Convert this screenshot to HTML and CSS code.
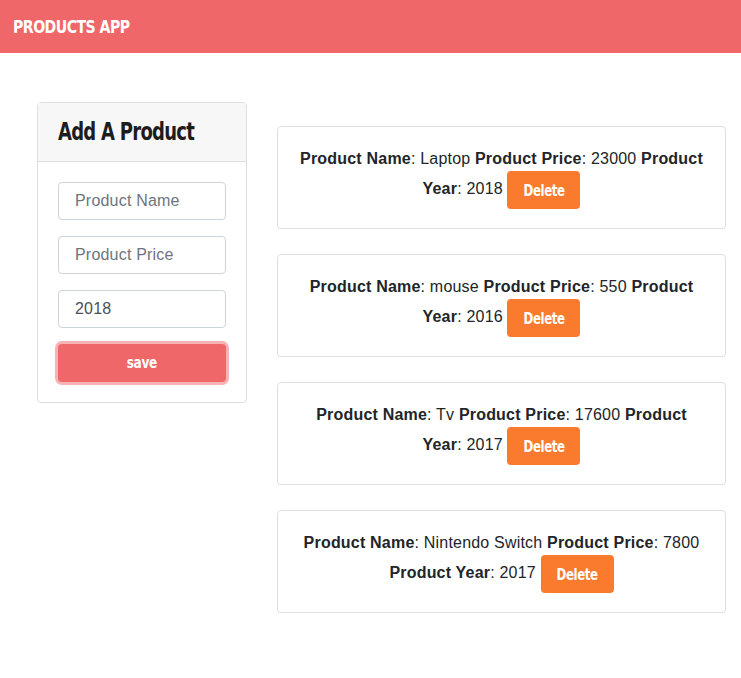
FILE: index.html
```html
<!DOCTYPE html>
<html>
<head>
<meta charset="utf-8">
<link rel="stylesheet" href="styles.css">
</head>
<body>
<header class="navbar"><span class="brand">PRODUCTS APP</span></header>
<main class="layout">
  <section class="form-card">
    <div class="form-card-header"><h2><span class="narrow">Add A Product</span></h2></div>
    <form class="form-card-body">
      <input class="field" type="text" placeholder="Product Name">
      <input class="field" type="text" placeholder="Product Price">
      <input class="field" type="text" value="2018">
      <button type="button" class="save-btn"><span class="narrow">save</span></button>
    </form>
  </section>
  <section class="list">
    <div class="product"><p><b>Product Name</b>: Laptop <b>Product Price</b>: 23000 <b>Product Year</b>: 2018 <button class="del-btn"><span class="narrow">Delete</span></button></p></div>
    <div class="product"><p><b>Product Name</b>: mouse <b>Product Price</b>: 550 <b>Product Year</b>: 2016 <button class="del-btn"><span class="narrow">Delete</span></button></p></div>
    <div class="product"><p><b>Product Name</b>: Tv <b>Product Price</b>: 17600 <b>Product Year</b>: 2017 <button class="del-btn"><span class="narrow">Delete</span></button></p></div>
    <div class="product"><p><b>Product Name</b>: Nintendo Switch <b>Product Price</b>: 7800 <b>Product Year</b>: 2017 <button class="del-btn"><span class="narrow">Delete</span></button></p></div>
  </section>
</main>
</body>
</html>
```

FILE: styles.css
```css
* { box-sizing: border-box; }
body {
  margin: 0;
  font-family: "Liberation Sans", Arial, sans-serif;
  font-size: 16px;
  line-height: 1.5;
  color: #212529;
  background: #fff;
}
.navbar {
  height: 53px;
  background: #f0676a;
  display: flex;
  align-items: center;
  padding: 0 13px;
}
.brand,
.form-card-header h2,
.save-btn,
.del-btn {
  font-family: "DejaVu Sans", sans-serif;
  font-stretch: condensed;
  font-weight: bold;
}
.brand {
  display: inline-block;
  color: #fff;
  font-size: 18px;
  letter-spacing: -0.6px;
  transform: scaleX(0.87);
  transform-origin: left center;
}
.narrow {
  display: inline-block;
}
.layout {
  display: flex;
  align-items: flex-start;
  padding: 49px 15px 40px 37px;
  gap: 30px;
}
.form-card {
  width: 210px;
  border: 1px solid #dfdfdf;
  border-radius: 4px;
  flex: none;
}
.form-card-header {
  background: #f7f7f7;
  border-bottom: 1px solid #dfdfdf;
  height: 59px;
  padding: 0 20px;
  display: flex;
  align-items: center;
}
.form-card-header h2 {
  margin: 0;
  font-size: 25px;
  letter-spacing: -0.9px;
  color: #1d1d1d;
  white-space: nowrap;
}
.form-card-header .narrow {
  transform: scaleX(0.8);
  transform-origin: left center;
}
.form-card-body {
  margin: 0;
  padding: 20px;
  display: flex;
  flex-direction: column;
  gap: 16px;
}
.field {
  height: 38px;
  border: 1px solid #ced4da;
  border-radius: 4px;
  padding: 0 16px;
  font-family: "Liberation Sans", Arial, sans-serif;
  font-size: 16px;
  letter-spacing: 0.2px;
  color: #495057;
  width: 100%;
}
.field::placeholder { color: #6c757d; }
.save-btn {
  height: 38px;
  border: none;
  border-radius: 4px;
  background: #f0676a;
  color: #fff;
  font-size: 15px;
  letter-spacing: -0.4px;
  box-shadow: 0 0 0 3px rgba(240, 103, 106, 0.5);
}
.save-btn .narrow { transform: scaleX(0.9); }
.list {
  flex: 1;
  display: flex;
  flex-direction: column;
  gap: 25px;
  padding-top: 24px;
}
.product {
  border: 1px solid #dfdfdf;
  border-radius: 4px;
  padding: 20px 20px 19px;
  text-align: center;
  letter-spacing: 0.2px;
}
.product p { margin: 0; }
.del-btn {
  height: 38px;
  width: 73px;
  padding: 0;
  border: none;
  border-radius: 4px;
  background: #fb7b2e;
  color: #fff;
  font-size: 16px;
  letter-spacing: -0.5px;
  vertical-align: middle;
}
.del-btn .narrow { transform: scaleX(0.82); }
```
